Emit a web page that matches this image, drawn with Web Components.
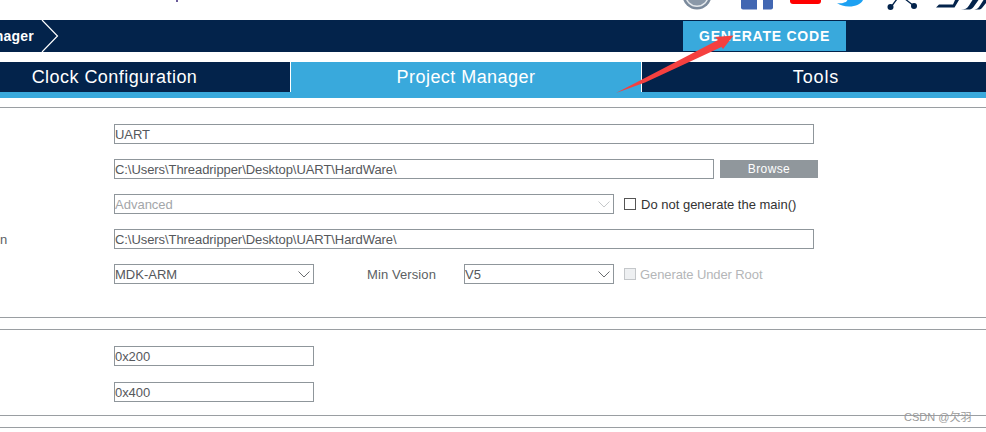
<!DOCTYPE html>
<html>
<head>
<meta charset="utf-8">
<style>
html, body { margin: 0; background: #fff; }
body { width: 986px; height: 432px; overflow: hidden; position: relative; font-family: "Liberation Sans", Arial, sans-serif; }
</style>
</head>
<body>
<st-icons></st-icons>
<st-nav label="Project Manager" action="GENERATE CODE"></st-nav>
<st-tabs></st-tabs>

<st-section style="--top: 16px; --bottom: 33px; margin-top: 9px">
  <st-row><st-input width="700">UART</st-input></st-row>
  <st-row><st-input width="600">C:\Users\Threadripper\Desktop\UART\HardWare\</st-input><st-button>Browse</st-button></st-row>
  <st-row>
    <st-select width="500" disabled>Advanced</st-select>
    <st-check>Do not generate the main()</st-check>
  </st-row>
  <st-row label="n"><st-input width="700">C:\Users\Threadripper\Desktop\UART\HardWare\</st-input></st-row>
  <st-row>
    <st-select width="200">MDK-ARM</st-select>
    <st-caption>Min Version</st-caption>
    <st-select width="150">V5</st-select>
    <st-check disabled>Generate Under Root</st-check>
  </st-row>
</st-section>
<st-section style="--top: 11px; --bottom: 0px"></st-section>

<st-section style="--top: 16px; --bottom: 13px; --gap: 16px">
  <st-row><st-input width="200">0x200</st-input></st-row>
  <st-row><st-input width="200">0x400</st-input></st-row>
</st-section>
<st-section style="--top: 11px; --bottom: 0px"></st-section>
<st-section style="--top: 0px; --bottom: 0px"></st-section>

<st-arrow></st-arrow>
<st-watermark>CSDN @欠羽</st-watermark>

<script>
class StIcons extends HTMLElement {
  constructor() {
    super();
    this.attachShadow({mode: 'open'}).innerHTML = `
<style>
:host { display: block; height: 20px; overflow: hidden; position: relative; }
svg { display: block; }
.mark { width: 2px; height: 2px; background: #6a5a9a; position: absolute; left: 176px; top: 0; }
</style>
<div class="mark"></div>
<svg width="986" height="20" viewBox="0 0 986 20">
  <!-- seal -->
  <circle cx="697" cy="-5" r="14.500" fill="#7b8a9c"/>
  <circle cx="697" cy="-5" r="12" fill="#e4e8ec"/>
  <circle cx="697" cy="-5" r="10.500" fill="#8a98a8"/>
  <!-- facebook -->
  <path d="M741 -4h16v13.500h-14a2 2 0 0 1-2-2z" fill="#4267b2"/>
  <path d="M763 -4h10v11.500a2 2 0 0 1-2 2h-8z" fill="#4267b2"/>
  <!-- youtube -->
  <path d="M790 -4h31v5a3 3 0 0 1-3 3h-25a3 3 0 0 1-3-3z" fill="#f00"/>
  <!-- twitter -->
  <path d="M837 3c5 1 7-.500 9-1l1.500-2h15.500c-2 4-7 6.500-14 6.500-5 0-9-1.500-12-3.500z" fill="#1da1f2"/>
  <!-- share nodes -->
  <path d="M891 7L900 -5L914 6" fill="none" stroke="#03234b" stroke-width="1.300"/>
  <circle cx="890.500" cy="7" r="3" fill="#03234b"/>
  <circle cx="914" cy="6" r="3" fill="#03234b"/>
  <!-- logo -->
  <path d="M936 7.500l3-3h14l2-4.500h4l-4.500 7.500z" fill="#03234b"/>
  <path d="M961 9.500c4 0 6-1 8-4l3.500-5.500h6l-5 7c-1.500 2-3 2.500-5 2.500z" fill="#03234b"/>
  <path d="M973 9.500c4 0 5-1 7-4l3.500-5.500h2.500v3l-4 5c-1 1-2 1.500-4 1.500z" fill="#03234b"/>
</svg>`;
  }
}

class StNav extends HTMLElement {
  constructor() {
    super();
    this.attachShadow({mode: 'open'}).innerHTML = `
<style>
:host { display: flex; height: 32px; background: #03234b; color: #fff; align-items: center; }
.crumb { width: 34px; overflow: hidden; display: flex; justify-content: flex-end; font-size: 14px; font-weight: bold; letter-spacing: .2px; white-space: nowrap; flex-shrink: 0; }
svg { display: block; margin-left: 7px; flex-shrink: 0; }
button { margin-left: 624px; width: 163px; height: 30px; border: 0; padding: 0 0 1px; background: #39a9dc; color: #fff; font: bold 14px "Liberation Sans", Arial, sans-serif; letter-spacing: .76px; }
</style>
<div class="crumb"><span id="label"></span></div>
<svg width="18" height="32" viewBox="0 0 18 32"><path d="M1 0L16.500 16L1 32" fill="none" stroke="#fff" stroke-width="1.200"/></svg>
<button id="action"></button>`;
    this.shadowRoot.getElementById('label').textContent = this.getAttribute('label');
    this.shadowRoot.getElementById('action').textContent = this.getAttribute('action');
  }
}

class StTabs extends HTMLElement {
  constructor() {
    super();
    this.attachShadow({mode: 'open'}).innerHTML = `
<style>
:host { display: grid; grid-template-columns: 290px 350px 344px; column-gap: 1px; margin-top: 10px; height: 30px; border-bottom: 6px solid #39a9dc; background: #fff; color: #fff; font-size: 18px; }
div { display: flex; align-items: center; justify-content: center; background: #03234b; letter-spacing: .45px; }
.on { background: #39a9dc; }
</style>
<div style="padding-right:61px">Clock Configuration</div>
<div class="on">Project Manager</div>
<div style="padding-left:4px;letter-spacing:.9px">Tools</div>`;
  }
}

class StSection extends HTMLElement {
  constructor() {
    super();
    this.attachShadow({mode: 'open'}).innerHTML = `
<style>
:host { display: flex; flex-direction: column; gap: var(--gap, 15px); border-top: 1px solid #9a9ea2; padding: var(--top) 0 var(--bottom); }
</style>
<slot></slot>`;
  }
}

class StRow extends HTMLElement {
  constructor() {
    super();
    this.attachShadow({mode: 'open'}).innerHTML = `
<style>
:host { display: flex; align-items: center; height: 20px; padding-left: 114px; position: relative; font-size: 13px; color: #5c5f63; }
.label { width: 0; margin-left: -114px; margin-right: 114px; white-space: nowrap; }
</style>
<span class="label"></span><slot></slot>`;
    this.shadowRoot.querySelector('.label').textContent = this.getAttribute('label') || '';
  }
}

class StInput extends HTMLElement {
  constructor() {
    super();
    this.attachShadow({mode: 'open'}).innerHTML = `
<style>
:host { display: flex; align-items: center; box-sizing: border-box; height: 20px; border: 1px solid #8f969b; padding-left: 0; font-size: 13px; letter-spacing: -.07px; color: #55585c; background: #fff; white-space: nowrap; flex-shrink: 0; }
</style>
<slot></slot>`;
    this.style.width = this.getAttribute('width') + 'px';
  }
}

class StSelect extends HTMLElement {
  constructor() {
    super();
    this.attachShadow({mode: 'open'}).innerHTML = `
<style>
:host { display: flex; align-items: center; justify-content: space-between; box-sizing: border-box; height: 20px; border: 1px solid #8f969b; padding: 0 3px 0 0; font-size: 13px; color: #55585c; background: #fff; flex-shrink: 0; }
:host([disabled]) { color: #a3a6a9; }
svg { display: block; }
path { stroke: #6a6d70; }
:host([disabled]) path { stroke: #c5c8ca; }
</style>
<slot></slot>
<svg width="12" height="7" viewBox="0 0 12 7"><path d="M.5 .5L6 6L11.500 .5" fill="none" stroke-width="1"/></svg>`;
    this.style.width = this.getAttribute('width') + 'px';
  }
}

class StCheck extends HTMLElement {
  constructor() {
    super();
    this.attachShadow({mode: 'open'}).innerHTML = `
<style>
:host { display: flex; align-items: center; gap: 5px; margin-left: 10px; font-size: 13px; color: #333; white-space: nowrap; }
:host([disabled]) { color: #b4b6b8; gap: 4px; letter-spacing: -.1px; }
i { display: block; box-sizing: border-box; width: 12px; height: 12px; border: 1px solid #555; background: #fff; }
:host([disabled]) i { border-color: #c4c7ca; background: #eef0f2; }
</style>
<i></i><slot></slot>`;
  }
}

class StButton extends HTMLElement {
  constructor() {
    super();
    this.attachShadow({mode: 'open'}).innerHTML = `
<style>
:host { display: flex; align-items: center; justify-content: center; width: 98px; height: 18px; margin-left: 6px; background: #90979c; color: #fff; font-size: 12px; letter-spacing: .4px; }
</style>
<slot></slot>`;
  }
}

class StCaption extends HTMLElement {
  constructor() {
    super();
    this.attachShadow({mode: 'open'}).innerHTML = `
<style>
:host { display: block; width: 97px; margin-left: 53px; font-size: 13px; letter-spacing: .1px; color: #5c5f63; white-space: nowrap; }
</style>
<slot></slot>`;
  }
}

class StArrow extends HTMLElement {
  constructor() {
    super();
    this.attachShadow({mode: 'open'}).innerHTML = `
<style>
:host { position: absolute; left: 610px; top: 30px; }
svg { display: block; }
</style>
<svg width="130" height="68" viewBox="610 30 130 68"><path d="M616 93L718 40L715 37L733.500 35.500L723 49L721.500 47L645 82.500Z" fill="#f5403f"/></svg>`;
  }
}

class StWatermark extends HTMLElement {
  constructor() {
    super();
    this.attachShadow({mode: 'open'}).innerHTML = `
<style>
:host { position: absolute; left: 904px; top: 408px; font: 11px "Liberation Sans", "Noto Sans CJK SC", sans-serif; color: #9a9a9a; white-space: nowrap; }
</style>
<slot></slot>`;
  }
}

customElements.define('st-icons', StIcons);
customElements.define('st-nav', StNav);
customElements.define('st-tabs', StTabs);
customElements.define('st-section', StSection);
customElements.define('st-row', StRow);
customElements.define('st-input', StInput);
customElements.define('st-select', StSelect);
customElements.define('st-check', StCheck);
customElements.define('st-button', StButton);
customElements.define('st-caption', StCaption);
customElements.define('st-arrow', StArrow);
customElements.define('st-watermark', StWatermark);
</script>
</body>
</html>
